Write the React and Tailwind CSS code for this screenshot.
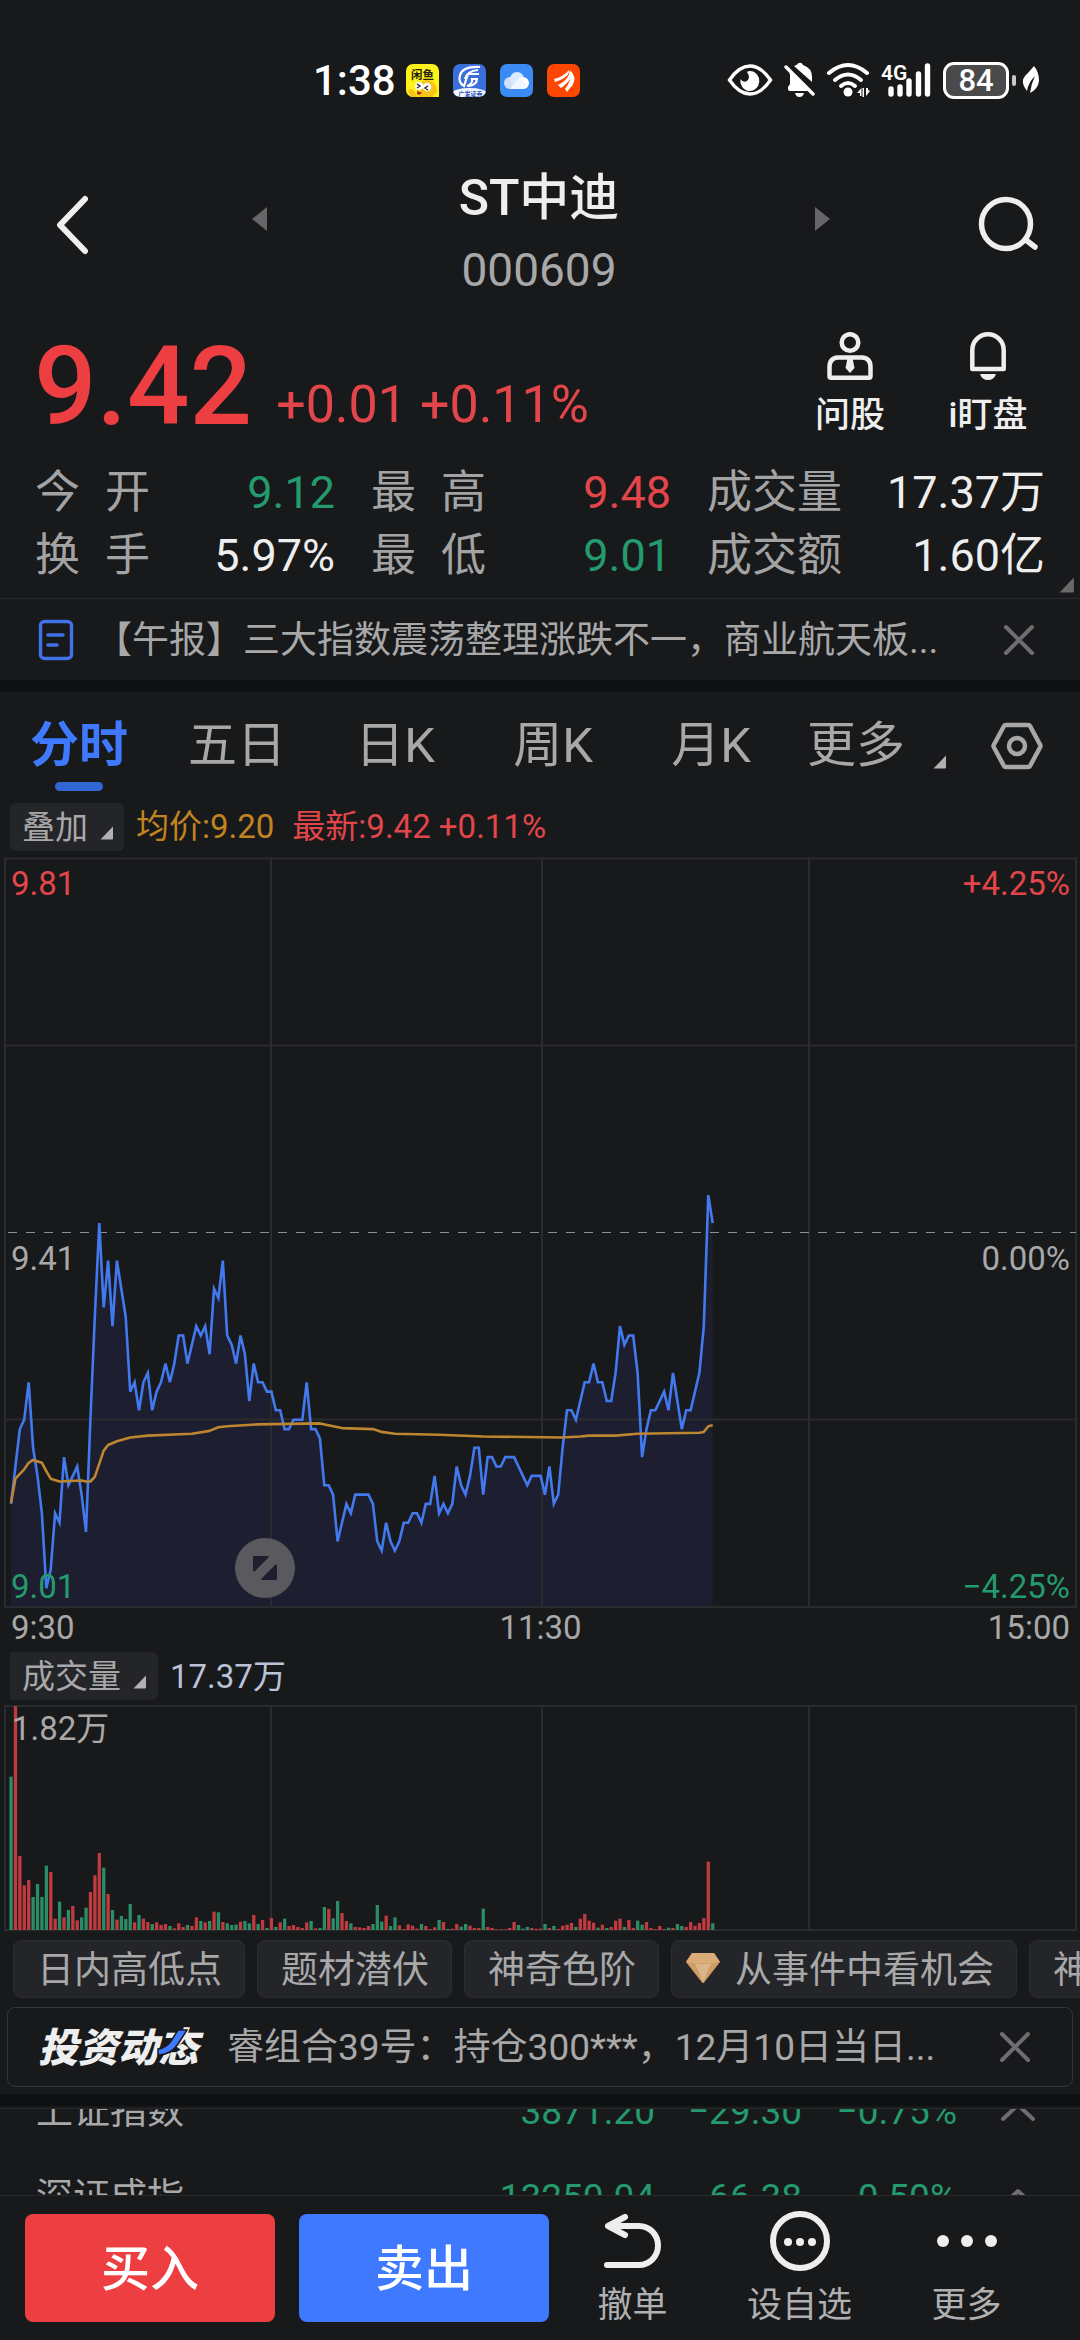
import React from "react";

/* Price per minute, in ticks of 0.01 below the previous close of 9.41. */
const PRICE_TICKS = [
  29, 25, 21, 20, 16, 23, 26, 30, 38, 36, 30, 31, 24, 27, 26, 25, 28, 32, 20, 9,
  -1, 8, 3, 10, 3, 6, 9, 17, 16, 19, 16, 15, 19, 17, 16, 14, 16, 14, 11, 11,
  14, 12, 10, 11, 10, 13, 6, 7, 3, 11, 12, 14, 11, 13, 18, 14, 16, 16, 17, 17,
  19, 19, 21, 21, 20, 20, 20, 16, 21, 21, 22, 27, 27, 28, 33, 31, 29, 30, 28, 28,
  28, 28, 29, 33, 34, 31, 33, 34, 33, 31, 31, 30, 30, 31, 29, 29, 26, 30, 29, 30,
  29, 25, 27, 28, 26, 23, 23, 28, 24, 24, 25, 25, 24, 24, 24, 25, 26, 27, 26, 26,
  26, 28, 25, 29, 28, 23, 19, 19, 20, 18, 16, 16, 14, 16, 16, 18, 18, 15, 10, 12,
  11, 11, 15, 24, 21, 19, 19, 18, 17, 19, 15, 18, 21, 19, 19, 17, 15, 10, -4, -1,
];

/* Average price line: [minute, ticks below 9.41]. */
const AVERAGE = [
  [0, 28.9], [1, 26.3], [3, 25.3], [4, 24.6], [5, 24.3], [7, 24.6], [8, 25.5],
  [9, 26.3], [11, 26.6], [16, 26.5], [17, 26.6], [18, 26.6], [19, 26.1],
  [20, 24.7], [21, 23.3], [22, 22.7], [24, 22.3], [27, 21.9], [31, 21.7],
  [41, 21.5], [45, 21.2], [47, 20.8], [49, 20.7], [56, 20.5], [70, 20.4],
  [73, 20.7], [75, 20.9], [82, 21], [84, 21.3], [87, 21.5], [97, 21.6],
  [107, 21.8], [125, 21.9], [129, 21.8], [131, 21.7], [137, 21.7],
  [142, 21.5], [156, 21.4], [157, 21.3], [158, 20.7], [159, 20.6],
];

/* Volume per minute in thirds of a pixel; negative values are down minutes. */
const VOLUME = [
  -460, 672, 222, 134, 150, -99, -138, -99, -193, 174, 34, -85, 38, -60, 72, 29,
  -38, -67, 114, 164, 231, -187, 108, -60, 31, -42, -33, -78, 23, -45, 34, 24,
  -18, 23, 15, 18, -12, 5, 20, 9, -15, 12, 38, -27, 23, -27, 55, -53, 24, -20,
  -15, -16, 25, -27, -20, 45, -18, 30, -6, 36, -9, 23, -34, 12, 15, 9, 6, 23,
  -27, 5, -6, -69, 63, -35, -87, 51, 27, -20, 9, 8, 6, 12, -18, -75, -25, 43,
  -12, -38, 14, 3, 17, 13, 4, -18, 12, 3, 8, -30, 24, -3, 4, 18, -10, -18, 13,
  6, 6, -64, 9, 6, 2, 2, 2, 6, 24, -15, -4, -9, 6, 4, 4, -18, 6, -12, 3, 13,
  16, 21, -9, 34, 48, 28, 22, -7, 16, -6, 9, 28, 34, -9, 30, 6, -28, -16, 24, 6,
  3, 12, 3, -7, 6, -18, -12, 9, 24, 13, 21, 36, 205, -20,
];

const minuteX = (n) => 11 + n * 4.413;
const tickY = (t) => 375.5 + t * 9.36;
const point = (n, t) => `${minuteX(n).toFixed(1)},${tickY(t).toFixed(1)}`;

const PRICE_LINE = PRICE_TICKS.map((t, n) => point(n, t)).join(" ");
const AVERAGE_LINE = AVERAGE.map(([n, t]) => point(n, t)).join(" ");
const AREA = `${minuteX(0)},749 ${PRICE_LINE} ${minuteX(159).toFixed(1)},749`;

function Corner({ className }) {
  return (
    <svg viewBox="0 0 14 14" className={className} aria-hidden="true">
      <path d="M13 0.5V12.5Q13 13.5 12 13.5H0.5Z" fill="currentColor" />
    </svg>
  );
}

function Cross() {
  return (
    <svg viewBox="0 0 32 32" className="size-8" fill="none" stroke="#6e6e70" strokeWidth="4" strokeLinecap="round" aria-hidden="true">
      <path d="M3 3L29 29M29 3L3 29" />
    </svg>
  );
}

function StatusBar() {
  return (
    <div className="flex h-40 items-center justify-between pr-[39px] pl-[313px] text-white">
      <div className="flex items-center gap-[14px]">
        <span className="-mr-1 pt-0.5 text-[42px] leading-none font-medium">1:38</span>
        <svg viewBox="0 0 33 33" className="size-[33px]" aria-hidden="true">
          <rect width="33" height="33" rx="7" fill="#fdf11a" />
          <circle cx="21" cy="26" r="10" fill="#f9c418" />
          <path d="M2 27Q5 23 8 27L12 33H5Z" fill="#f9c418" />
          <path d="M26 33H33V26Z" fill="#fdf11a" />
          <circle cx="13" cy="22" r="4" fill="#fff" />
          <circle cx="21" cy="23" r="4.2" fill="#fff" />
          <path d="M11 20L14 22L11 24M22 22L19 24L22 26" stroke="#222" strokeWidth="1.4" fill="none" />
          <path d="M11 27Q13 28.500 16 28Q14 32 11 30Z" fill="#b3251c" />
          <text x="5" y="14.500" fontSize="11.500" fontWeight="700" fill="#22200a">闲鱼</text>
        </svg>
        <svg viewBox="0 0 33 33" className="size-[33px]" aria-hidden="true">
          <defs>
            <clipPath id="broker"><rect width="33" height="33" rx="7" /></clipPath>
          </defs>
          <g clipPath="url(#broker)">
            <rect width="33" height="33" fill="#3b6fdc" />
            <path d="M27 3Q10 2 7 11Q5 19 11 22L15 10H26M14 22Q20 20 19 15H25M24 14Q24 21 16 22M12 15Q14 7 25 6" stroke="#fff" strokeWidth="2.200" fill="none" />
            <ellipse cx="16.500" cy="29" rx="17" ry="5" fill="#f2f6ff" />
            <text x="5.500" y="31.500" fontSize="6" fontWeight="700" fill="#2b57b8">广发证券</text>
          </g>
        </svg>
        <svg viewBox="0 0 33 33" className="size-[33px]" aria-hidden="true">
          <rect width="33" height="33" rx="7" fill="#3a8cf4" />
          <circle cx="10" cy="19" r="6" fill="#cfe1fc" />
          <circle cx="17" cy="15" r="7" fill="#dbe9fe" />
          <circle cx="23" cy="19" r="6" fill="#fff" />
          <path d="M10 25L20 13L28 22Q26 25 23 25Z" fill="#f2f7ff" />
        </svg>
        <svg viewBox="0 0 33 33" className="size-[33px]" aria-hidden="true">
          <rect width="33" height="33" rx="7" fill="#fd4602" />
          <path d="M7 15Q16 13 22 6Q23 13 8 18ZM11 21Q22 16 23 6Q28 14 14 24ZM18 25Q25 16 24 7Q29 14 27 17Q26 22 23 24L20 28Z" fill="#fff" />
        </svg>
      </div>
      <div className="flex items-center">
        <svg viewBox="0 0 46 34" className="h-[34px] w-[46px]" aria-hidden="true">
          <path d="M2.500 17Q12 3 23 3T43.500 17Q34 31 23 31T2.500 17Z" fill="none" stroke="#fff" strokeWidth="3.400" />
          <path d="M23 8A9.500 10 0 1 1 13.500 16Q16 20 20 18Q24 15 20 9Q21 8 23 8Z" fill="#fff" />
        </svg>
        <svg viewBox="0 0 32 36" className="ml-[11px] h-9 w-8" aria-hidden="true">
          <path d="M10 4Q13 3 14 1.500Q16 0 18 1.500L19 3Q28 6 28 15V20ZM4 27V25L6 22V13L5 9L24 29H6Q4 29 4 27Z" fill="#fff" />
          <path d="M2 5L29 32" stroke="#fff" strokeWidth="3.400" strokeLinecap="round" />
          <path d="M11 31H20Q19 35 15.500 35T11 31Z" fill="#fff" />
        </svg>
        <svg viewBox="0 0 46 36" className="ml-[10px] h-9 w-[46px]" aria-hidden="true">
          <g fill="none" stroke="#fff" strokeWidth="4" strokeLinecap="round">
            <path d="M3 11Q22 -5 41 11" />
            <path d="M9 18Q22 7 35 18" />
            <path d="M15 24Q22 18 29 24" />
          </g>
          <circle cx="22" cy="30" r="4.500" fill="#fff" />
          <path d="M31 31L35.500 26V34H34V31ZM38 26V35H36.500V26ZM40 26V34L44 29L42 28V26Z" fill="#fff" />
        </svg>
        <svg viewBox="0 0 52 36" className="ml-[9px] h-9 w-[52px]" aria-hidden="true">
          <text x="0" y="18" fontSize="21" fontWeight="600" fill="#fff">4G</text>
          <path d="M10 27V32M19 25V32M28 19V32M37.500 12V32M46.500 4V32" stroke="#fff" strokeWidth="5.400" strokeLinecap="round" />
        </svg>
        <span className="ml-[10px] flex h-[37px] w-[66px] items-center justify-center rounded-[11px] border-[3px] border-white bg-[#4a4a4c] text-[31px] leading-none font-medium">84</span>
        <span className="ml-[3px] h-[11px] w-1 rounded bg-[#c8c8c9]" />
        <svg viewBox="0 0 20 32" className="ml-[5px] h-8 w-5" aria-hidden="true">
          <path d="M13 2Q18 8 18 17Q17 25 9 29Q10 20 14 12Q7 19 6 27Q-1 18 4 12Q8 8 13 2Z" fill="#fff" />
        </svg>
      </div>
    </div>
  );
}

function Header() {
  return (
    <header className="flex items-start justify-between pr-10 pl-[54px] text-[#eeeeee]">
      <button aria-label="返回" className="flex h-[130px] w-12 items-center">
        <svg viewBox="0 0 36 60" className="h-[60px] w-9" fill="none" stroke="currentColor" strokeWidth="6" strokeLinecap="round" strokeLinejoin="round" aria-hidden="true">
          <path d="M31 4L6 30L31 56" />
        </svg>
      </button>
      <div className="flex flex-1 items-start justify-between pr-[145px] pl-[149px]">
        <button aria-label="上一只" className="flex h-[118px] items-center">
          <svg viewBox="0 0 16 24" className="h-6 w-4" aria-hidden="true"><path d="M16 0V24L1 12Z" fill="#666668" /></svg>
        </button>
        <div className="pt-0.5 pr-1 text-center">
          <h1 className="text-[50px] leading-[72px] font-medium">ST中迪</h1>
          <p className="text-[46px] leading-[72px] text-[#a8a8a9]">000609</p>
        </div>
        <button aria-label="下一只" className="flex h-[118px] items-center">
          <svg viewBox="0 0 16 24" className="h-6 w-4" aria-hidden="true"><path d="M0 0V24L15 12Z" fill="#666668" /></svg>
        </button>
      </div>
      <button aria-label="搜索" className="flex h-[130px] items-center">
        <svg viewBox="0 0 64 60" className="h-[60px] w-16" fill="none" stroke="currentColor" strokeWidth="5.500" strokeLinecap="round" aria-hidden="true">
          <circle cx="30" cy="29" r="24.500" />
          <path d="M50 45L59 52" />
        </svg>
      </button>
    </header>
  );
}

function Quote() {
  return (
    <section className="flex items-end pr-[46px] pl-[34px] text-[#ed3e42]">
      <span className="pt-[9px] text-[110px] leading-[144px] font-medium">9.42</span>
      <span className="ml-6 flex-1 text-[52px] leading-[108px] text-[#e2464a]">+0.01 +0.11%</span>
      <div className="flex gap-[46px] self-start pt-[26px] text-[#eeeeee]">
        <button className="flex w-[92px] flex-col items-center">
          <svg viewBox="0 0 46 48" className="h-12 w-[46px]" fill="none" stroke="currentColor" strokeWidth="4.500" aria-hidden="true">
            <circle cx="23" cy="10.500" r="8.300" />
            <path d="M11 25.500H35Q43.500 26 43.500 35V44Q43.500 45.700 42 45.700H4Q2.500 45.700 2.500 44V35Q2.500 26 11 25.500Z" />
            <path d="M20.500 26H25.500L27.500 36L23 41L18.500 36Z" fill="currentColor" stroke="none" />
          </svg>
          <span className="mt-[18px] text-[35px] leading-9 font-medium whitespace-nowrap">问股</span>
        </button>
        <button className="flex w-[92px] flex-col items-center">
          <svg viewBox="0 0 46 48" className="h-12 w-[46px]" fill="none" stroke="currentColor" strokeWidth="4.500" aria-hidden="true">
            <path d="M7.300 37V18A15.700 15.700 0 0 1 38.700 18V37H7.300Z" strokeLinejoin="round" />
            <path d="M15 42H31Q29 48 23 48T15 42Z" fill="currentColor" stroke="none" />
          </svg>
          <span className="mt-[18px] text-[35px] leading-9 font-medium whitespace-nowrap">i盯盘</span>
        </button>
      </div>
    </section>
  );
}

const STATS = [
  ["今开", "9.12", "text-[#239b6e]"],
  ["最高", "9.48", "text-[#e2464a]"],
  ["成交量", "17.37万", "text-[#eeeeee]"],
  ["换手", "5.97%", "text-[#eeeeee]"],
  ["最低", "9.01", "text-[#239b6e]"],
  ["成交额", "1.60亿", "text-[#eeeeee]"],
];

function Stats() {
  return (
    <dl className="relative grid grid-cols-[300fr_300fr_338fr] gap-x-9 px-[35px] pt-0.5 pb-[11px] text-[45px] leading-[63px]">
      {STATS.map(([label, value, tone]) => (
        <div key={label} className="flex justify-between">
          <dt className="flex min-w-[115px] justify-between text-[#a3a3a4]">
            {label.split("").map((c) => <span key={c}>{c}</span>)}
          </dt>
          <dd className={tone}>{value}</dd>
        </div>
      ))}
      <Corner className="absolute right-[5px] bottom-[5px] size-4 text-[#6a6a6c]" />
    </dl>
  );
}

function News() {
  return (
    <div className="flex h-[82px] items-center border-t border-[#28292b] pr-[45px] pl-[38px]">
      <svg viewBox="0 0 36 42" className="h-[42px] w-9" fill="none" stroke="#3f72e6" strokeWidth="3.400" aria-hidden="true">
        <rect x="2.500" y="2.500" width="31" height="37" rx="4" />
        <path d="M10 16H25M10 26H19" strokeLinecap="round" />
      </svg>
      <a href="#news" className="ml-[21px] flex-1 pt-0.5 text-[37px] whitespace-nowrap text-[#a8a8a9]">【午报】三大指数震荡整理涨跌不一，商业航天板...</a>
      <button aria-label="关闭"><Cross /></button>
    </div>
  );
}

function Tabs() {
  return (
    <nav className="grid grid-cols-[158fr_158fr_158fr_158fr_158fr_158fr_132fr] text-[49px] text-[#a8a8a9]">
      {["分时", "五日", "日K", "周K", "月K"].map((name, i) => (
        <button key={name} className="flex flex-col items-center pt-[21px]">
          <span className={i === 0 ? "leading-[66px] font-bold text-[#3f79ff]" : "leading-[66px]"}>{name}</span>
          <span className={i === 0 ? "mt-[3px] h-[9px] w-12 rounded-full bg-[#3067d2]" : "mt-[3px] h-[9px]"} />
        </button>
      ))}
      <button className="flex items-end justify-center gap-[28px] pb-3 pl-4">
        <span className="leading-[66px]">更多</span>
        <Corner className="mb-[10px] size-[14px] text-[#b2b2b3]" />
      </button>
      <button aria-label="设置" className="flex items-center justify-center pt-2 pl-[6px]">
        <svg viewBox="0 0 52 48" className="h-12 w-[52px]" fill="none" stroke="currentColor" strokeWidth="4.500" strokeLinejoin="round" aria-hidden="true">
          <path d="M15 3H37Q38.500 3 39 4L49 22.500Q50 24 49 25.500L39 44Q38.500 45 37 45H15Q13.500 45 13 44L3 25.500Q2 24 3 22.500L13 4Q13.500 3 15 3Z" />
          <circle cx="26" cy="24" r="8" />
        </svg>
      </button>
    </nav>
  );
}

function PriceChart() {
  return (
    <section className="text-[33px] text-[#a8a8a9]">
      <div className="flex h-12 items-center pl-[10px]">
        <button className="flex h-12 items-center gap-[12px] rounded-md bg-[#242529] pr-[10px] pl-3">
          <span className="pt-0.5">叠加</span>
          <Corner className="mt-3 size-[14px] text-[#b2b2b3]" />
        </button>
        <span className="ml-3 text-[#c28420]">均价:9.20</span>
        <span className="ml-[18px] text-[#e2464a]">最新:9.42 +0.11%</span>
      </div>
      <div className="relative mt-[6px]">
        <svg viewBox="0 0 1080 751" className="block w-full" fill="none" aria-hidden="true">
          <polygon points={AREA} fill="#1d1e2f" />
          <path d="M5 1.500H1076V750H5ZM5 188.500H1076M5 562.500H1076M271 1V750M542 1V750M809 1V750" stroke="#2a2b2e" strokeWidth="2" />
          <path d="M8 375.500H1076" stroke="#8b8f98" strokeWidth="1.200" strokeDasharray="9 9" />
          <polyline points={PRICE_LINE} stroke="#4379ee" strokeWidth="2.600" />
          <polyline points={AVERAGE_LINE} stroke="#bd8630" strokeWidth="2.600" strokeLinejoin="round" />
        </svg>
        <div className="absolute inset-0 flex flex-col justify-between pr-[10px] pl-[11px] leading-[42px]">
          <div className="flex flex-1 items-start justify-between pt-[6px]">
            <span className="text-[#e2464a]">9.81</span>
            <span className="text-[#e2464a]">+4.25%</span>
          </div>
          <div className="flex flex-1 flex-col justify-between pt-1">
            <div className="flex justify-between">
              <span>9.41</span>
              <span>0.00%</span>
            </div>
            <div className="flex justify-between text-[#239b6e]">
              <span>9.01</span>
              <span>−4.25%</span>
            </div>
          </div>
        </div>
        <button aria-label="全屏" className="absolute bottom-[10px] left-[235px] flex size-[60px] items-center justify-center rounded-full bg-[#5a5a5e]">
          <svg viewBox="0 0 24 24" className="size-6" fill="#1d1e2f" aria-hidden="true">
            <path d="M1 0H14.500Q17 0 15 2L2 15Q0 16.500 0 14V1Q0 0 1 0Z" />
            <path d="M23 24H9.500Q7 24 9 22L22 9Q24 7.500 24 10V23Q24 24 23 24Z" />
          </svg>
        </button>
      </div>
      <div className="grid h-10 grid-cols-3 items-center pr-[10px] pl-[11px] leading-10">
        <span>9:30</span>
        <span className="text-center">11:30</span>
        <span className="text-right">15:00</span>
      </div>
    </section>
  );
}

function VolumeChart() {
  return (
    <section className="mt-1 text-[33px] text-[#a8a8a9]">
      <div className="flex h-12 items-center pl-[10px]">
        <button className="flex h-12 items-center gap-[12px] rounded-r-md bg-[#242529] pr-[11px] pl-3">
          <span className="pt-0.5">成交量</span>
          <Corner className="mt-3 size-[14px] text-[#b2b2b3]" />
        </button>
        <span className="ml-3 pt-0.5 text-[#b9c3d8]">17.37万</span>
      </div>
      <div className="relative mt-[5px]">
        <svg viewBox="0 0 1080 226" className="block w-full" fill="none" aria-hidden="true">
          <path d="M5 1H1076V225H5ZM271 1V225M542 1V225M809 1V225" stroke="#2a2b2e" strokeWidth="2" />
          {VOLUME.map((v, n) => {
            const h = Math.abs(v) / 3;
            return <rect key={n} x={minuteX(n) - 1.6} y={225 - h} width="3.300" height={h} fill={v > 0 ? "#bf3b3f" : "#2b8d67"} />;
          })}
        </svg>
        <span className="absolute top-0 left-3 leading-[48px]">1.82万</span>
      </div>
    </section>
  );
}

function Chips() {
  const chip = "flex h-[58px] shrink-0 items-center rounded-lg border border-[#2c2d30] bg-[#242529] pt-0.5 pr-[22px] pl-[23px]";
  return (
    <div className="mt-[9px] flex gap-3 overflow-hidden pl-[13px] text-[37px] leading-none whitespace-nowrap text-[#a8a8a9]">
      <button className={chip}>日内高低点</button>
      <button className={chip}>题材潜伏</button>
      <button className={chip}>神奇色阶</button>
      <button className="flex h-[58px] shrink-0 items-center gap-[15px] rounded-lg border border-[#2c2d30] bg-[#242529] pt-0.5 pr-[22px] pl-[14px]">
        <svg viewBox="0 0 34 30" className="-mt-1 h-[30px] w-[34px]" aria-hidden="true">
          <path d="M6 0H28L34 9L18 29.500Q17 30.500 16 29.500L0 9Z" fill="#cf9d66" />
          <path d="M6 0H28L34 9Q17 12 0 9Z" fill="#d9ac78" />
          <path d="M9 10.500Q17 12 25 10.500L17 29Z" fill="#dbb68b" />
        </svg>
        从事件中看机会
      </button>
      <button className={chip}>神奇色阶</button>
    </div>
  );
}

function Dynamics() {
  return (
    <div className="mx-[7px] mt-[9px] flex h-20 items-center rounded-lg border border-[#343538] pr-[41px] pl-[30px]">
      <span className="relative mt-1 w-[163px] text-[40px] leading-none font-black whitespace-nowrap text-[#eeeeee] italic">
        投资动态
        <svg viewBox="0 0 32 28" className="absolute top-0 right-3 h-7 w-8" fill="none" aria-hidden="true">
          <path d="M1 20Q9 19 14 12L21 1H30L21 15Q14 26 1 26Z" fill="#3f79ff" stroke="#18191b" strokeWidth="1.500" />
        </svg>
      </span>
      <a href="#dynamics" className="ml-[26px] flex-1 pt-0.5 text-[37px] whitespace-nowrap text-[#a8a8a9]">睿组合39号：持仓300***，12月10日当日...</a>
      <button aria-label="关闭"><Cross /></button>
    </div>
  );
}

const INDICES = [
  ["上证指数", "3871.20", "−29.30", "−0.75%"],
  ["深证成指", "13250.04", "−66.38", "−0.50%"],
];

function Indices() {
  return (
    <div className="mt-[2px] flex h-[87px] items-center overflow-hidden border-t border-[#28292b] pt-[6px]">
      <table className="w-full table-fixed text-[37px] text-[#239b6e]">
        <tbody>
          {INDICES.map(([name, value, change, percent]) => (
            <tr key={name} className="h-[86px]">
              <th scope="row" className="w-[400px] pl-9 text-left font-normal text-[#a8a8a9]">{name}</th>
              <td className="text-right">{value}</td>
              <td className="w-[147px] text-right">{change}</td>
              <td className="w-[155px] text-right">{percent}</td>
              <td className="w-[123px]">
                <svg viewBox="0 0 36 20" className="ml-[43px] h-5 w-9" fill="none" stroke="#6e6e70" strokeWidth="4" strokeLinecap="round" strokeLinejoin="round" aria-hidden="true">
                  <path d="M3 17L18 3L33 17" />
                </svg>
              </td>
            </tr>
          ))}
        </tbody>
      </table>
    </div>
  );
}

function Footer() {
  const action = "flex flex-1 flex-col items-center";
  const label = "mt-[22px] text-[35px] leading-8 text-[#b0b0b1]";
  return (
    <footer className="flex border-t border-[#28292b] pt-[18px] pr-[30px] pb-[18px] pl-[25px] text-[#eeeeee]">
      <button className="h-[108px] w-[250px] rounded-lg bg-[#ed3e42] pt-1 text-[49px] font-medium text-white">买入</button>
      <button className="ml-6 h-[108px] w-[250px] rounded-lg bg-[#3f79ff] pt-1 text-[49px] font-medium text-white">卖出</button>
      <div className="flex flex-1">
        <button className={action}>
          <svg viewBox="0 0 60 54" className="h-[54px] w-[60px]" fill="none" stroke="currentColor" strokeWidth="6" strokeLinecap="round" strokeLinejoin="round" aria-hidden="true">
            <path d="M4 51H36A19 19.500 0 0 0 36 12H5M22 3L5 12L22 21" />
          </svg>
          <span className={label}>撤单</span>
        </button>
        <button className={action}>
          <svg viewBox="0 0 60 54" className="h-[54px] w-[60px] overflow-visible" fill="currentColor" aria-hidden="true">
            <circle cx="30" cy="27" r="27" fill="none" stroke="currentColor" strokeWidth="6" />
            <circle cx="18" cy="28" r="4" />
            <circle cx="30" cy="28" r="4" />
            <circle cx="42" cy="28" r="4" />
          </svg>
          <span className={label}>设自选</span>
        </button>
        <button className={action}>
          <svg viewBox="0 0 60 54" className="h-[54px] w-[60px]" fill="currentColor" aria-hidden="true">
            <circle cx="6" cy="27" r="6" />
            <circle cx="30" cy="27" r="6" />
            <circle cx="54" cy="27" r="6" />
          </svg>
          <span className={label}>更多</span>
        </button>
      </div>
    </footer>
  );
}

export default function App() {
  return (
    <main lang="zh-CN" className="flex min-h-screen flex-col overflow-hidden bg-[#18191b] [font-family:Roboto,'Noto_Sans_CJK_SC',sans-serif]">
      <StatusBar />
      <Header />
      <Quote />
      <Stats />
      <News />
      <div className="h-3 bg-[#0f1012]" />
      <Tabs />
      <div className="h-3" />
      <PriceChart />
      <VolumeChart />
      <Chips />
      <Dynamics />
      <div className="mt-[7px] h-3 bg-[#0f1012]" />
      <Indices />
      <Footer />
    </main>
  );
}
